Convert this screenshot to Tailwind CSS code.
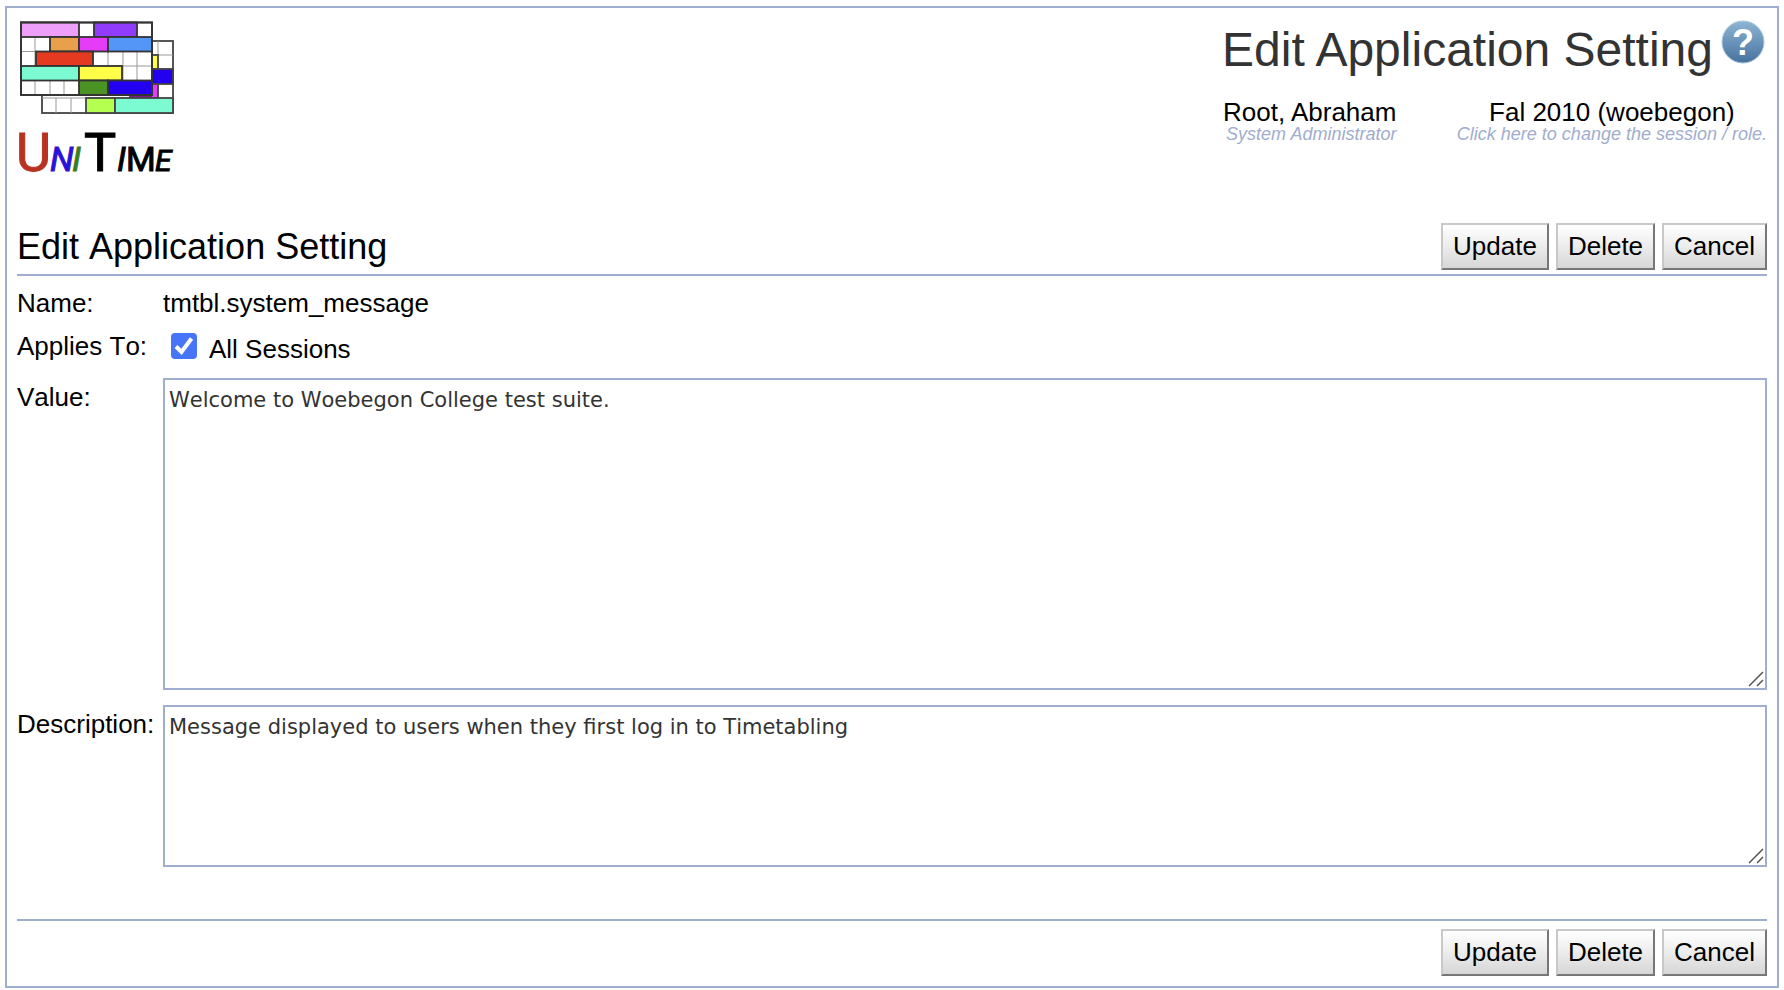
<!DOCTYPE html>
<html lang="en">
<head>
  <meta charset="UTF-8" />
  <meta name="viewport" content="width=device-width, initial-scale=1.0" />
  <title>Edit Application Setting</title>
  <script src="https://cdn.jsdelivr.net/npm/@tailwindcss/browser@4"></script>
</head>
<body class="bg-white text-black text-[26px] leading-[28px] font-['Liberation_Sans',Arial,sans-serif]">

  <div class="mt-[6px] mx-[5px] border-2 border-[#9fadce] px-[10px] pb-[10px]">

    <!-- Header -->
    <header class="flex justify-between items-start pt-[10px] pb-[25px]">
      <a href="#" aria-label="UniTime">
        <svg class="w-[160px] h-[180px]" viewBox="17 18 160 180">
          <!-- back timetable -->
          <g stroke="#444" stroke-width="1.8">
            <rect x="42" y="41" width="131" height="72" fill="#fff" />
            <path d="M158 41v72M152 55h21M152 69h21M56 98v15M71 98v15M42 98h110" stroke="#999" stroke-width="1" />
            <rect x="148" y="55" width="10" height="14" fill="#ffff4a" />
            <rect x="148" y="69" width="25" height="15" fill="#2400f0" />
            <rect x="130" y="84" width="28" height="14" fill="#e23cf5" />
            <path d="M130 96h22" stroke="#7d1690" stroke-width="2" />
            <rect x="86" y="98" width="29" height="15" fill="#b5ff50" />
            <rect x="115" y="98" width="58" height="15" fill="#7cfbd3" />
          </g>
          <!-- front timetable -->
          <g stroke="#333" stroke-width="1.8">
            <rect x="21" y="22.500" width="131" height="72.500" fill="#fff" />
            <path d="M35 37v29M50 37v15M35 81v14M50 81v14M64 81v14M108 52v14M123 52v29M137 52v29M21 51.500h30M94 66h58" stroke="#999" stroke-width="1" />
            <rect x="21" y="22.500" width="58" height="14.500" fill="#ee9ff9" />
            <rect x="94" y="22.500" width="43" height="14.500" fill="#903cfa" />
            <rect x="50" y="37" width="29" height="14.500" fill="#e8a04a" />
            <rect x="79" y="37" width="29" height="14.500" fill="#e53cf8" />
            <rect x="108" y="37" width="44" height="14.500" fill="#5496f8" />
            <rect x="36" y="51.500" width="57" height="14.500" fill="#e33a20" />
            <rect x="21" y="66" width="58" height="14.500" fill="#7cfbd3" />
            <rect x="79" y="66" width="43" height="14.500" fill="#ffff4a" />
            <rect x="79" y="80.500" width="29" height="14.500" fill="#4b9423" />
            <rect x="108" y="80.500" width="44" height="14.500" fill="#2400f0" />
            <rect x="21" y="22.500" width="131" height="72.500" fill="none" />
          </g>
          <text y="171" font-family="Liberation Sans Narrow, Roboto, sans-serif" font-size="34">
            <tspan x="16" font-size="54" fill="#b93220" stroke="#b93220">U</tspan>
            <tspan x="50" font-style="italic" fill="#2a10d8" stroke="#2a10d8">N</tspan>
            <tspan x="72" font-style="italic" fill="#3c7d22" stroke="#3c7d22">I</tspan>
            <tspan x="84" font-size="54" stroke="#000">T</tspan>
            <tspan x="117" font-style="italic" stroke="#000">I</tspan>
            <tspan x="126" stroke="#000">M</tspan>
            <tspan x="155" font-style="italic" font-size="30" stroke="#000">E</tspan>
          </text>
        </svg>
      </a>

      <div class="pr-[2px]">
        <div class="flex items-start gap-[8px] pt-[4px]">
          <div class="text-[48px] leading-[56px] text-[#333]">Edit Application Setting</div>
          <button type="button" aria-label="Help" class="-mt-[2px]">
            <svg class="w-[44px] h-[44px]" viewBox="0 0 44 44">
              <defs>
                <linearGradient id="helpFill" x1="0" y1="0" x2="0" y2="1">
                  <stop offset="0" stop-color="#8db5d3" />
                  <stop offset="1" stop-color="#47729f" />
                </linearGradient>
              </defs>
              <circle cx="22" cy="22" r="21" fill="url(#helpFill)" stroke="#a9c6dc" />
              <text x="22" y="35" text-anchor="middle" font-family="Liberation Sans, sans-serif" font-size="36" font-weight="700" fill="#fff">?</text>
            </svg>
          </button>
        </div>
        <div class="flex justify-between pt-[22px] pl-px -mr-[2px]">
          <div class="text-right">
            <div class="leading-[24px]">Root, Abraham</div>
            <div class="text-[18px] leading-[20px] italic text-[#9fadce]">System Administrator</div>
          </div>
          <div class="text-center">
            <div class="leading-[24px]">Fal 2010 (woebegon)</div>
            <a href="#" class="block text-[18px] leading-[20px] italic text-[#9fadce]">Click here to change the session / role.</a>
          </div>
        </div>
      </div>
    </header>

    <form class="[font-kerning:none]">
      <!-- Title and top buttons -->
      <div class="flex justify-between items-center border-b-2 border-[#9fadce] pb-[4px]">
        <h1 class="text-[36px] leading-[47px]">Edit Application Setting</h1>
        <div class="flex gap-[7px]">
          <button type="button" class="h-[47px] px-[10px] pb-[2px] border-2 border-t-[#c8c8c8] border-l-[#c8c8c8] border-r-[#777] border-b-[#777] bg-linear-to-b from-white via-[#ececec] to-[#d6d6d6]">Update</button>
          <button type="button" class="h-[47px] px-[10px] pb-[2px] border-2 border-t-[#c8c8c8] border-l-[#c8c8c8] border-r-[#777] border-b-[#777] bg-linear-to-b from-white via-[#ececec] to-[#d6d6d6]">Delete</button>
          <button type="button" class="h-[47px] px-[10px] pb-[2px] border-2 border-t-[#c8c8c8] border-l-[#c8c8c8] border-r-[#777] border-b-[#777] bg-linear-to-b from-white via-[#ececec] to-[#d6d6d6]">Cancel</button>
        </div>
      </div>

      <!-- Setting fields -->
      <div class="grid grid-cols-[146px_1fr] gap-y-[15px] pt-[13px] pb-[52px]">
        <div>Name:</div>
        <div>tmtbl.system_message</div>

        <div>Applies To:</div>
        <div class="flex items-start gap-[12px] pl-[8px]">
          <span class="relative mt-px w-[26px] h-[26px]">
            <input id="allSessions" type="checkbox" checked class="peer block appearance-none w-[26px] h-[26px] rounded-[4px] border-2 border-[#767676] checked:border-[#4775f8] checked:bg-[#4775f8]" />
            <svg class="absolute inset-0 hidden peer-checked:block pointer-events-none" viewBox="0 0 26 26" fill="none" stroke="#fff" stroke-width="4">
              <path d="M5 13.500l5.500 5.500L20.500 5.500" />
            </svg>
          </span>
          <label for="allSessions" class="pt-[3px]">All Sessions</label>
        </div>

        <label for="value" class="pt-[5px]">Value:</label>
        <div class="relative">
          <textarea id="value" class="block w-full h-[312px] resize-none border-2 border-[#9fadce] px-[4px] py-[6px] text-[21px] leading-[28px] text-[#333] font-[Verdana,'DejaVu_Sans',sans-serif]">Welcome to Woebegon College test suite.</textarea>
          <svg class="absolute right-[3px] bottom-[3px] w-[16px] h-[16px] pointer-events-none" viewBox="0 0 16 16" stroke="#555" stroke-width="1.500">
            <path d="M1 15L15 1M9 15l6-6" />
          </svg>
        </div>

        <label for="description" class="pt-[5px]">Description:</label>
        <div class="relative">
          <textarea id="description" class="block w-full h-[162px] resize-none border-2 border-[#9fadce] px-[4px] py-[6px] text-[21px] leading-[28px] text-[#333] font-[Verdana,'DejaVu_Sans',sans-serif]">Message displayed to users when they first log in to Timetabling</textarea>
          <svg class="absolute right-[3px] bottom-[3px] w-[16px] h-[16px] pointer-events-none" viewBox="0 0 16 16" stroke="#555" stroke-width="1.500">
            <path d="M1 15L15 1M9 15l6-6" />
          </svg>
        </div>
      </div>

      <!-- Bottom buttons -->
      <div class="flex justify-end gap-[7px] border-t-2 border-[#9fadce] pt-[8px]">
        <button type="button" class="h-[47px] px-[10px] pb-[2px] border-2 border-t-[#c8c8c8] border-l-[#c8c8c8] border-r-[#777] border-b-[#777] bg-linear-to-b from-white via-[#ececec] to-[#d6d6d6]">Update</button>
        <button type="button" class="h-[47px] px-[10px] pb-[2px] border-2 border-t-[#c8c8c8] border-l-[#c8c8c8] border-r-[#777] border-b-[#777] bg-linear-to-b from-white via-[#ececec] to-[#d6d6d6]">Delete</button>
        <button type="button" class="h-[47px] px-[10px] pb-[2px] border-2 border-t-[#c8c8c8] border-l-[#c8c8c8] border-r-[#777] border-b-[#777] bg-linear-to-b from-white via-[#ececec] to-[#d6d6d6]">Cancel</button>
      </div>
    </form>
  </div>

</body>
</html>
